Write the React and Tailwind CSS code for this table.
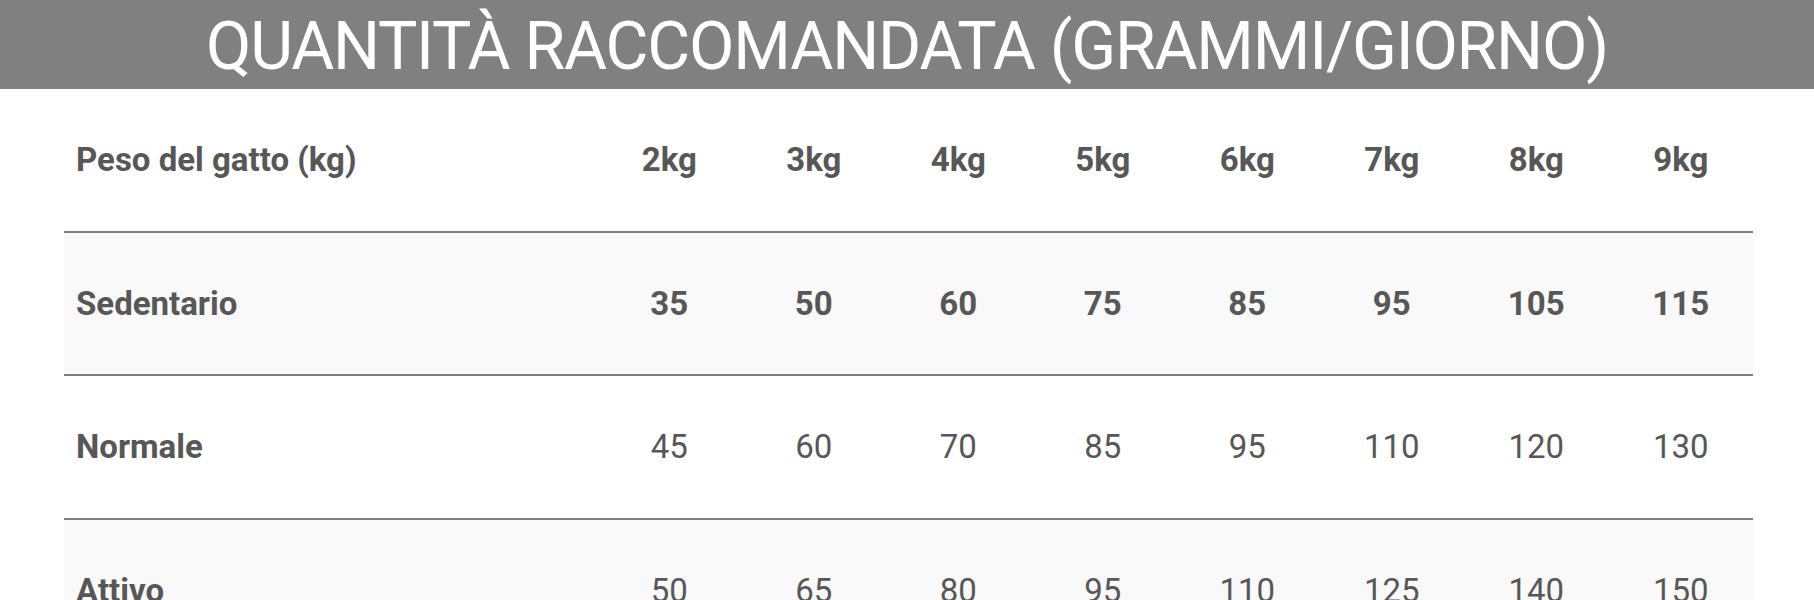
import React from "react";

const weights = ["2kg", "3kg", "4kg", "5kg", "6kg", "7kg", "8kg", "9kg"];

const rows = [
  { label: "Sedentario", values: [35, 50, 60, 75, 85, 95, 105, 115], bold: true, shaded: true },
  { label: "Normale", values: [45, 60, 70, 85, 95, 110, 120, 130], bold: false, shaded: false },
  { label: "Attivo", values: [50, 65, 80, 95, 110, 125, 140, 150], bold: false, shaded: true },
];

function Row({ label, cells, bold, shaded }) {
  return (
    <div
      className={`grid grid-cols-[533px_repeat(8,1fr)] items-center h-[143.5px] border-b-2 border-[#7d7d7d] ${
        shaded ? "bg-[#f9f9f9]" : "bg-white"
      }`}
    >
      <div className="pl-3 font-bold">{label}</div>
      {cells.map((c, i) => (
        <div key={i} className={`text-center ${bold ? "font-bold" : "font-normal"}`}>
          {c}
        </div>
      ))}
    </div>
  );
}

export default function App() {
  return (
    <div className="w-[1814px] h-[600px] overflow-hidden bg-white font-['Roboto',sans-serif]">
      {/* Title bar */}
      <div className="h-[89px] bg-[#808080] flex items-center justify-center pt-1">
        <h1 className="text-white text-[66px] font-normal leading-none tracking-[-1.2px]">
          QUANTITÀ RACCOMANDATA (GRAMMI/GIORNO)
        </h1>
      </div>

      {/* Table */}
      <div className="ml-[64px] w-[1689px] text-[33px] text-[#575757]">
        <Row label="Peso del gatto (kg)" cells={weights} bold shaded={false} />
        {rows.map((r) => (
          <Row key={r.label} label={r.label} cells={r.values} bold={r.bold} shaded={r.shaded} />
        ))}
      </div>
    </div>
  );
}
